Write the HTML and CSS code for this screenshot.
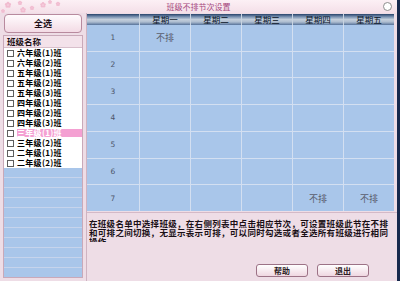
FILE: index.html
```html
<!DOCTYPE html>
<html>
<head>
<meta charset="utf-8">
<link rel="stylesheet" href="styles.css">
</head>
<body>
<div class="window">
  <div class="titlebar">
    <svg class="sakura" width="80" height="13" viewBox="0 0 80 13">
      <defs>
        <g id="fl">
          <circle cx="0" cy="-1.6" r="1.3"/>
          <circle cx="1.5" cy="-0.5" r="1.3"/>
          <circle cx="0.95" cy="1.3" r="1.3"/>
          <circle cx="-0.95" cy="1.3" r="1.3"/>
          <circle cx="-1.5" cy="-0.5" r="1.3"/>
        </g>
      </defs>
      <g fill="#f1bcd0">
        <use href="#fl" transform="translate(8,5) scale(1.1)"/>
        <use href="#fl" transform="translate(20,3) scale(0.8)"/>
        <use href="#fl" transform="translate(23,10) scale(1)"/>
        <use href="#fl" transform="translate(32,8) scale(0.8)"/>
        <use href="#fl" transform="translate(43,5) scale(1)"/>
        <use href="#fl" transform="translate(50,2) scale(0.7)"/>
        <use href="#fl" transform="translate(58,4) scale(0.8)"/>
        <use href="#fl" transform="translate(3,11) scale(0.7)"/>
      </g>
      <g fill="#fbe6ee">
        <circle cx="8" cy="5" r="0.6"/><circle cx="23" cy="10" r="0.6"/><circle cx="43" cy="5" r="0.6"/>
      </g>
    </svg>
    <span class="title">班级不排节次设置</span>
    <span class="close"></span>
  </div>
  <div class="main">
    <div class="left">
      <button class="btn-all">全选</button>
      <div class="list">
        <div class="list-head">班级名称</div>
        <div class="row"><span class="cb"></span><span class="name">六年级(1)班</span></div>
        <div class="row"><span class="cb"></span><span class="name">六年级(2)班</span></div>
        <div class="row"><span class="cb"></span><span class="name">五年级(1)班</span></div>
        <div class="row"><span class="cb"></span><span class="name">五年级(2)班</span></div>
        <div class="row"><span class="cb"></span><span class="name">五年级(3)班</span></div>
        <div class="row"><span class="cb"></span><span class="name">四年级(1)班</span></div>
        <div class="row"><span class="cb"></span><span class="name">四年级(2)班</span></div>
        <div class="row"><span class="cb"></span><span class="name">四年级(3)班</span></div>
        <div class="row sel"><span class="cb"></span><span class="name">三年级(1)班</span></div>
        <div class="row"><span class="cb"></span><span class="name">三年级(2)班</span></div>
        <div class="row"><span class="cb"></span><span class="name">二年级(1)班</span></div>
        <div class="row"><span class="cb"></span><span class="name">二年级(2)班</span></div>
        <div class="blank"></div>
        <div class="blank"></div>
        <div class="blank"></div>
        <div class="blank"></div>
        <div class="blank"></div>
        <div class="blank"></div>
        <div class="blank"></div>
        <div class="blank"></div>
        <div class="blank"></div>
        <div class="blank"></div>
        <div class="blank"></div>
      </div>
    </div>
    <div class="right">
      <div class="table">
        <div class="thead">
          <div class="th"></div>
          <div class="th">星期一</div>
          <div class="th">星期二</div>
          <div class="th">星期三</div>
          <div class="th">星期四</div>
          <div class="th">星期五</div>
        </div>
        <div class="tbody">
          <div class="td num">1</div><div class="td">不排</div><div class="td"></div><div class="td"></div><div class="td"></div><div class="td"></div>
          <div class="td num">2</div><div class="td"></div><div class="td"></div><div class="td"></div><div class="td"></div><div class="td"></div>
          <div class="td num">3</div><div class="td"></div><div class="td"></div><div class="td"></div><div class="td"></div><div class="td"></div>
          <div class="td num">4</div><div class="td"></div><div class="td"></div><div class="td"></div><div class="td"></div><div class="td"></div>
          <div class="td num">5</div><div class="td"></div><div class="td"></div><div class="td"></div><div class="td"></div><div class="td"></div>
          <div class="td num">6</div><div class="td"></div><div class="td"></div><div class="td"></div><div class="td"></div><div class="td"></div>
          <div class="td num">7</div><div class="td"></div><div class="td"></div><div class="td"></div><div class="td">不排</div><div class="td">不排</div>
        </div>
      </div>
      <div class="rule"></div>
      <div class="note">在班级名单中选择班级，在右侧列表中点击相应节次，可设置班级此节在不排和可排之间切换，无显示表示可排，可以同时勾选或者全选所有班级进行相同操作。</div>
      <div class="actions">
        <button class="btn">帮助</button>
        <button class="btn">退出</button>
      </div>
    </div>
  </div>
</div>
</body>
</html>
```

FILE: styles.css
```css
html, body {
  margin: 0;
  padding: 0;
}
body {
  width: 400px;
  height: 281px;
  overflow: hidden;
  background: #17294d;
  font-family: "Noto Sans CJK SC", "Noto Sans", sans-serif;
}
.window {
  width: 397px;
  height: 281px;
  background: #eedde6;
  display: flex;
  flex-direction: column;
}
.titlebar {
  position: relative;
  height: 13px;
  flex: none;
  background: linear-gradient(#fcf0f5, #f4dfe8);
  display: grid;
  grid-template-columns: 1fr auto 1fr;
  align-items: center;
}
.sakura {
  position: absolute;
  left: 0;
  top: 0;
}
.title {
  grid-column: 2;
  font-size: 8px;
  line-height: 13px;
  color: #a5477c;
  position: relative;
}
.close {
  grid-column: 3;
  justify-self: end;
  width: 7px;
  height: 7px;
  border: 1px solid #8e8e8e;
  border-radius: 50%;
  background: #fff;
  margin-right: 5px;
}
.main {
  flex: 1;
  display: flex;
  min-height: 0;
}
.left {
  width: 86px;
  flex: none;
  box-sizing: border-box;
  padding: 1px 3px 0 3px;
  display: flex;
  flex-direction: column;
}
.btn-all {
  margin: 0 1px;
  height: 19px;
  padding: 0;
  border: 1px solid #b88a9e;
  border-radius: 4px;
  background: linear-gradient(#fffbfd, #f3dbe5);
  font-family: "Noto Sans CJK SC", sans-serif;
  font-weight: bold;
  font-size: 9px;
  color: #201018;
}
.list {
  margin-top: 2px;
  height: 243px;
  box-sizing: border-box;
  border: 1px solid #c9a9b9;
  background: #fff;
  overflow: hidden;
}
.list-head {
  height: 12px;
  box-sizing: border-box;
  background: #f3e2ea;
  border-bottom: 1px solid #d8bfcb;
  padding-left: 3px;
  font-size: 8.5px;
  line-height: 11px;
  font-weight: bold;
  color: #1a0f14;
}
.row {
  height: 10px;
  display: flex;
  align-items: center;
  padding-left: 3px;
}
.cb {
  width: 5px;
  height: 5px;
  flex: none;
  border: 1px solid #5e5e5e;
  background: #fff;
  margin-right: 3px;
}
.name {
  flex: 1;
  height: 10px;
  font-size: 8px;
  line-height: 10px;
  letter-spacing: 0.3px;
  font-weight: bold;
  color: #000;
  white-space: nowrap;
  overflow: hidden;
}
.row.sel .name {
  background: linear-gradient(transparent 1px, #f4a0d2 1px, #f4a0d2 9px, transparent 9px);
  color: #fff;
}
.blank {
  height: 9px;
  background: #a9c6ea;
  border-bottom: 1px solid #c6d4ec;
}
.right {
  flex: 1;
  border-left: 1px solid #cfb3c1;
  display: flex;
  flex-direction: column;
  padding-top: 1px;
}
.table {
  width: 307px;
}
.thead {
  display: grid;
  grid-template-columns: 52px repeat(5, 1fr);
  column-gap: 1px;
  height: 11px;
  background: #c8d3e0;
}
.th {
  background: linear-gradient(#27426a 0%, #7890b0 25%, #c3cedb 50%, #aebdd0 72%, #56729a 100%);
  font-size: 8.5px;
  line-height: 11px;
  text-align: center;
  color: #0a1428;
}
.tbody {
  display: grid;
  grid-template-columns: 52px repeat(5, 1fr);
  grid-template-rows: repeat(7, 1fr);
  gap: 1px;
  height: 186px;
  background: #d3dff1;
}
.td {
  background: #a9c6ea;
  display: flex;
  align-items: center;
  justify-content: center;
  font-size: 9px;
  color: #5a5e6e;
}
.td.num {
  font-family: "DejaVu Sans", sans-serif;
  font-size: 7.5px;
  color: #4c5468;
}
.rule {
  height: 1px;
  margin-top: 1px;
  background: #d4b9c7;
}
.note {
  margin: 6px 0 0 2px;
  width: 303px;
  height: 23px;
  overflow: hidden;
  font-size: 8.5px;
  line-height: 9px;
  letter-spacing: 0.3px;
  font-weight: bold;
  color: #1a1016;
}
.actions {
  margin-top: auto;
  display: flex;
  justify-content: flex-end;
  gap: 9px;
  padding: 0 28px 4px 0;
}
.btn {
  width: 52px;
  height: 13px;
  padding: 0;
  border: 1px solid #9c7286;
  border-radius: 3px;
  background: linear-gradient(#ffffff, #efd7e1);
  font-family: "Noto Sans CJK SC", sans-serif;
  font-weight: bold;
  font-size: 8px;
  line-height: 11px;
  color: #2a1a22;
}
```
